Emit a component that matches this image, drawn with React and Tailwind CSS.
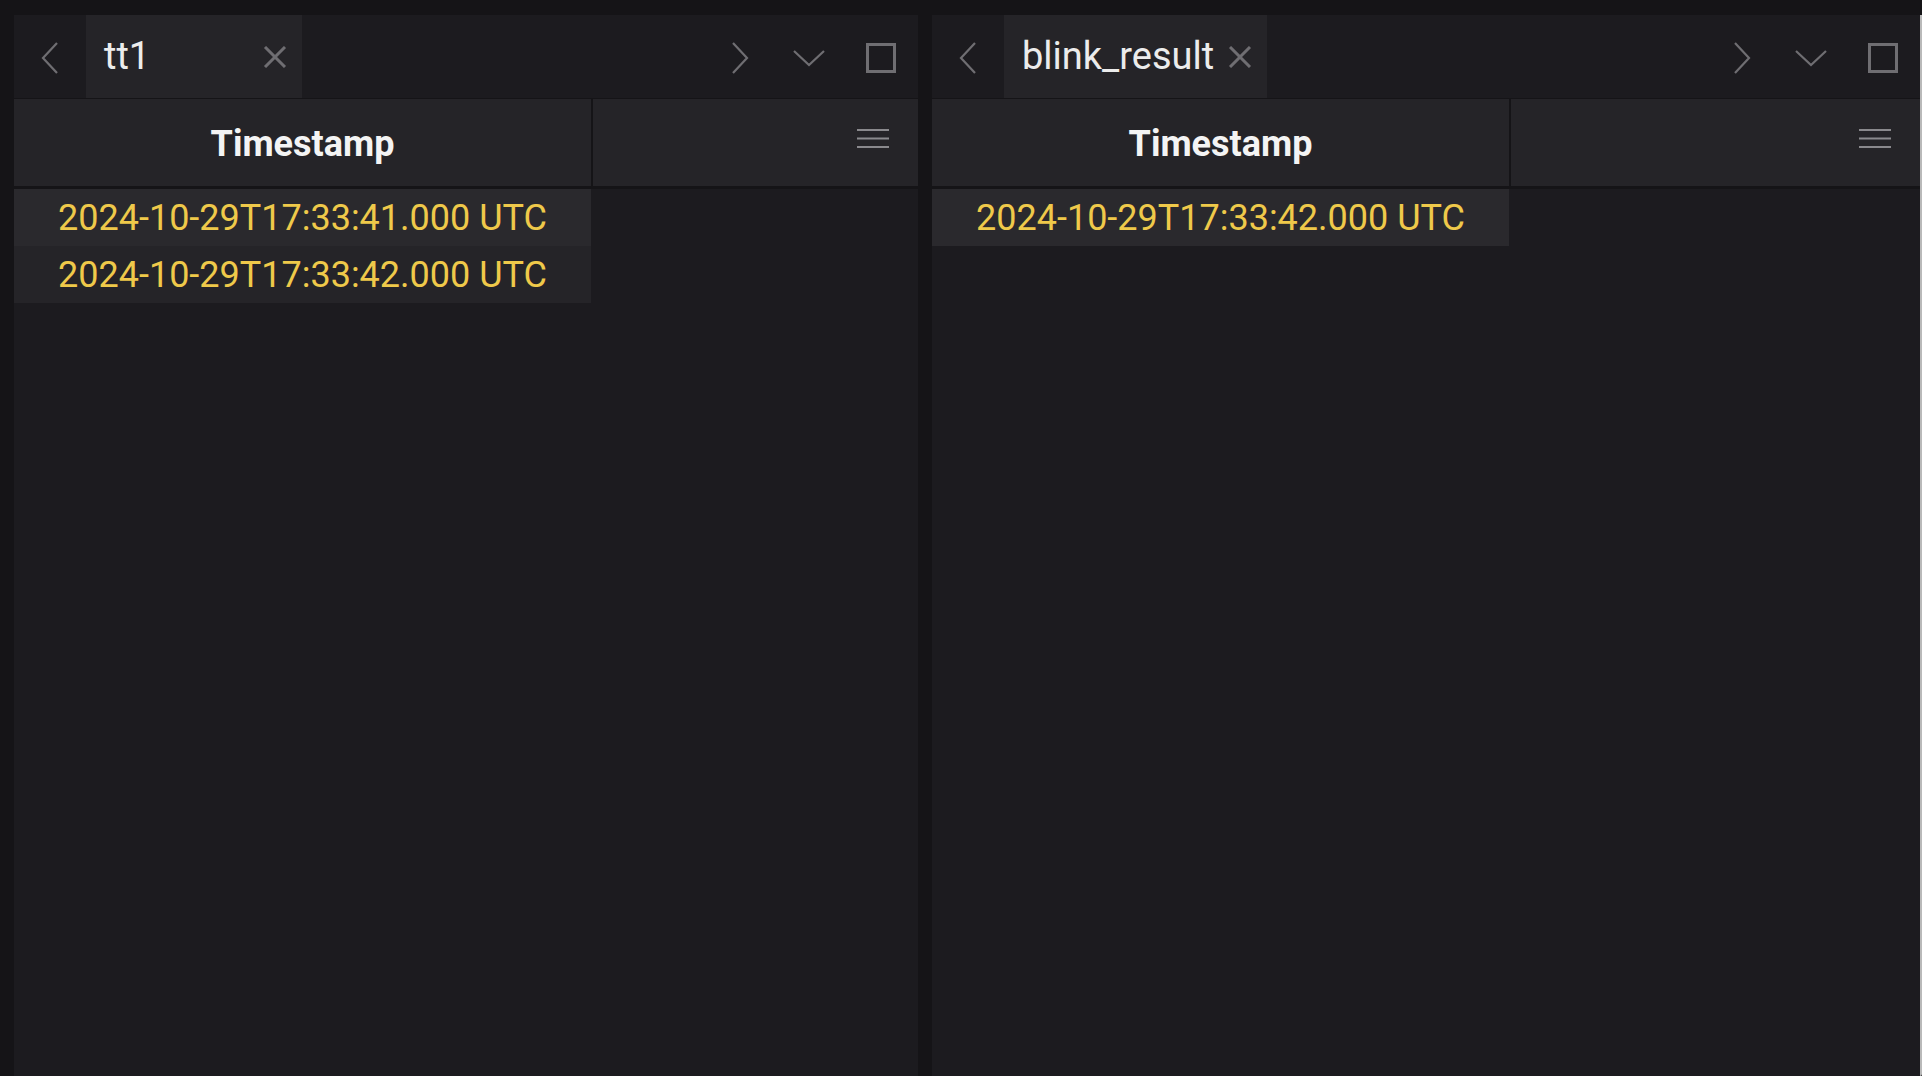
import React from 'react';

const ChevronLeft = () => (
  <svg width="18" height="32" viewBox="0 0 18 32" fill="none" stroke="#6f6e72" strokeWidth="2.2">
    <polyline points="16,1 2,16 16,31" />
  </svg>
);

const ChevronRight = () => (
  <svg width="18" height="32" viewBox="0 0 18 32" fill="none" stroke="#6f6e72" strokeWidth="2.2">
    <polyline points="2,1 16,16 2,31" />
  </svg>
);

const ChevronDown = () => (
  <svg width="32" height="18" viewBox="0 0 32 18" fill="none" stroke="#6f6e72" strokeWidth="2.2">
    <polyline points="1,2 16,16 31,2" />
  </svg>
);

const CloseIcon = () => (
  <svg width="24" height="22" viewBox="0 0 24 22" fill="none" stroke="#6f6e72" strokeWidth="3">
    <line x1="2" y1="1" x2="22" y2="21" />
    <line x1="22" y1="1" x2="2" y2="21" />
  </svg>
);

const SquareIcon = () => (
  <svg width="30" height="30" viewBox="0 0 30 30" fill="none" stroke="#6f6e72" strokeWidth="3">
    <rect x="1.5" y="1.5" width="27" height="27" />
  </svg>
);

const MenuIcon = () => (
  <svg width="32" height="20" viewBox="0 0 32 20" fill="#8a898d">
    <rect x="0" y="0" width="32" height="2" />
    <rect x="0" y="8.5" width="32" height="2" />
    <rect x="0" y="17" width="32" height="2" />
  </svg>
);

const Pane = ({ title, tabWidth, rows, width }) => (
  <div className={`flex flex-col bg-[#1c1b1f] ${width}`}>
    {/* tab bar */}
    <div className="flex h-[83px] items-stretch">
      <div className="flex w-[72px] items-center justify-center pt-[2px]">
        <ChevronLeft />
      </div>
      <div className={`flex items-center justify-between bg-[#252428] pl-[18px] pr-[15px] ${tabWidth}`}>
        <span className="text-[38px] leading-none text-[#ececec] pb-[1px]">{title}</span>
        <CloseIcon />
      </div>
      <div className="flex flex-1 items-center justify-end pr-[22px] pt-[2px]">
        <div className="mr-[44px]">
          <ChevronRight />
        </div>
        <div className="mr-[41px]">
          <ChevronDown />
        </div>
        <SquareIcon />
      </div>
    </div>
    <div className="h-[1px] bg-[#151417]" />

    {/* header */}
    <div className="flex h-[87px]">
      <div className="flex w-[577px] items-center justify-center bg-[#252428]">
        <span className="text-[36px] font-bold text-[#f4f4f4] pt-[3px]">Timestamp</span>
      </div>
      <div className="w-[2px] bg-[#151417]" />
      <div className="flex flex-1 items-start justify-end bg-[#252428] pr-[29px] pt-[30px]">
        <MenuIcon />
      </div>
    </div>
    <div className="h-[3px] bg-[#151417]" />

    {/* rows */}
    <div className="flex flex-1 flex-col">
      {rows.map((r, i) => (
        <div
          key={r}
          className={`flex h-[57px] w-[577px] items-center justify-center ${i % 2 === 0 ? 'bg-[#2a292d]' : 'bg-[#252428]'}`}
        >
          <span className="text-[36px] text-[#efc94a]">{r}</span>
        </div>
      ))}
    </div>
  </div>
);

const App = () => {
  return (
    <div className="flex h-[1076px] w-[1922px] flex-col overflow-hidden bg-[#151417] pt-[15px] font-[Roboto,sans-serif]">
      <div className="flex flex-1 pl-[14px]">
        <Pane
          title="tt1"
          tabWidth="w-[216px]"
          width="w-[904px]"
          rows={['2024-10-29T17:33:41.000 UTC', '2024-10-29T17:33:42.000 UTC']}
        />
        <div className="w-[14px]" />
        <Pane
          title="blink_result"
          tabWidth="w-[263px]"
          width="w-[988px]"
          rows={['2024-10-29T17:33:42.000 UTC']}
        />
        <div className="w-[2px] rounded-br-[6px] bg-[#b9b9b9]" />
      </div>
    </div>
  );
};

export default App;
